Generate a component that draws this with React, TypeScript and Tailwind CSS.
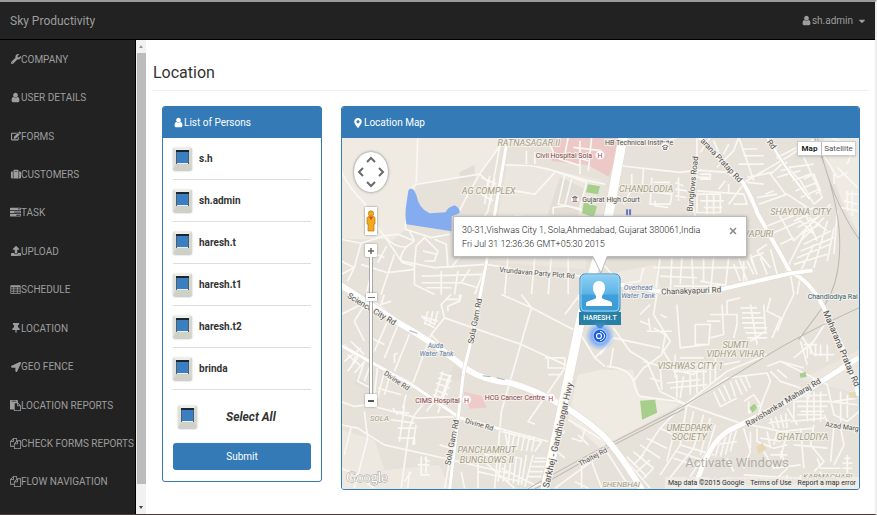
import { useState } from "react";
import type { ReactNode } from "react";
import {
  FaCaretDown,
  FaEdit,
  FaLocationArrow,
  FaMapMarkerAlt,
  FaSuitcase,
  FaThumbtack,
  FaUpload,
  FaWrench,
} from "react-icons/fa";

const ICON_PATHS = {
  user: "M1536 1399q0 109-62.5 187t-150.5 78h-854q-88 0-150.5-78t-62.5-187q0-85 8.5-160.5t31.5-152 58.5-131 94-89 134.5-34.5q131 128 313 128t313-128q76 0 134.5 34.5t94 89 58.5 131 31.5 152 8.5 160.5zm-256-887q0 159-112.5 271.5t-271.5 112.5-271.5-112.5-112.5-271.5 112.5-271.5 271.5-112.5 271.5 112.5 112.5 271.5z",
  tasks:
    "M1024 1408h640v-128h-640v128zm-384-512h1024v-128h-1024v128zm640-512h384v-128h-384v128zm512 832v256q0 26-19 45t-45 19h-1664q-26 0-45-19t-19-45v-256q0-26 19-45t45-19h1664q26 0 45 19t19 45zm0-512v256q0 26-19 45t-45 19h-1664q-26 0-45-19t-19-45v-256q0-26 19-45t45-19h1664q26 0 45 19t19 45zm0-512v256q0 26-19 45t-45 19h-1664q-26 0-45-19t-19-45v-256q0-26 19-45t45-19h1664q26 0 45 19t19 45z",
  table:
    "M160 200h1472q96 0 96 96v1200q0 96-96 96h-1472q-96 0-96-96v-1200q0-96 96-96zm32 312v240h352v-240zm480 0v240h448v-240zm576 0v240h352v-240zm-1056 360v240h352v-240zm480 0v240h448v-240zm576 0v240h352v-240zm-1056 360v230h352v-230zm480 0v230h448v-230zm576 0v230h352v-230z",
  paste:
    "M768 1664h896v-640h-416q-40 0-68-28t-28-68v-416h-384v1152zm256-1440v-64q0-13-9.5-22.5t-22.5-9.5h-704q-13 0-22.5 9.5t-9.5 22.5v64q0 13 9.5 22.5t22.5 9.5h704q13 0 22.5-9.5t9.5-22.5zm256 672h299l-299-299v299zm512 128v672q0 40-28 68t-68 28h-960q-40 0-68-28t-28-68v-160h-544q-40 0-68-28t-28-68v-1344q0-40 28-68t68-28h1088q40 0 68 28t28 68v328q21 13 36 28l408 408q28 28 48 76t20 88z",
  files:
    "M1696 384q40 0 68 28t28 68v1216q0 40-28 68t-68 28h-960q-40 0-68-28t-28-68v-288h-544q-40 0-68-28t-28-68v-672q0-40 20-88t48-76l408-408q28-28 76-48t88-20h416q40 0 68 28t28 68v328q68-40 128-40h416zm-544 213l-299 299h299v-299zm-640-384l-299 299h299v-299zm196 647l316-316v-416h-384v416q0 40-28 68t-68 28h-416v640h512v-256q0-40 20-88t48-76zm956 804v-1152h-384v416q0 40-28 68t-68 28h-416v640h896z",
};

function Glyph({ name, className = "" }: { name: keyof typeof ICON_PATHS; className?: string }) {
  return (
    <svg viewBox="0 0 1792 1792" fill="currentColor" fillRule="evenodd" className={`size-[11px] shrink-0 ${className}`} aria-hidden="true">
      <path d={ICON_PATHS[name]} />
    </svg>
  );
}

const NAV: { label: string; icon: ReactNode }[] = [
  { label: "COMPANY", icon: <FaWrench /> },
  { label: "USER DETAILS", icon: <Glyph name="user" /> },
  { label: "FORMS", icon: <FaEdit /> },
  { label: "CUSTOMERS", icon: <FaSuitcase /> },
  { label: "TASK", icon: <Glyph name="tasks" /> },
  { label: "UPLOAD", icon: <FaUpload /> },
  { label: "SCHEDULE", icon: <Glyph name="table" /> },
  { label: "LOCATION", icon: <FaThumbtack /> },
  { label: "GEO FENCE", icon: <FaLocationArrow /> },
  { label: "LOCATION REPORTS", icon: <Glyph name="paste" /> },
  { label: "CHECK FORMS REPORTS", icon: <Glyph name="files" /> },
  { label: "FLOW NAVIGATION", icon: <Glyph name="files" /> },
];

const PERSONS = ["s.h", "sh.admin", "haresh.t", "haresh.t1", "haresh.t2", "brinda"];

function Tick({ id, checked, onChange }: { id: string; checked: boolean; onChange: () => void }) {
  return (
    <input
      id={id}
      type="checkbox"
      checked={checked}
      onChange={onChange}
      className="h-[23px] w-[19px] shrink-0 appearance-none rounded-[2px] border-x-[3px] border-t-[3px] border-b-[6px] border-t-[#efefea] border-r-[#d6d7ce] border-b-[#cfd1c6] border-l-[#dfe0d8] bg-[#b8c4cc] shadow-[0_1px_2px_#bbb,inset_0_2px_0_#1c2630,inset_1px_0_0_#4c5d6b,inset_-1px_0_0_#4c5d6b,inset_0_-1px_0_#e8eef2] checked:bg-[#3a7fc1]"
    />
  );
}

/* Side streets, one set of paths for each quarter of the map, drawn at three times the map's scale. */
const STREETS = {
  nw: [
    "M250 130L245 265M20 230Q50 290 90 325L130 400L150 425L200 500L300 520L455 510L600 535L740 545",
    "M240 272L435 240L500 150L525 130M435 240L395 310L370 360M435 240L460 262L452 310",
    "M240 272Q215 300 213 405L290 430L345 420M500 212L590 215L640 225L760 260L810 270M575 170V210M600 175V210",
    "M20 435L80 447L150 425L190 420L240 440M80 447L60 520L20 540M150 425Q180 460 215 458L240 440",
    "M157 455L130 505M180 480L140 600M80 510L160 535L240 525M100 470L150 490M60 520L40 560M110 540L95 600",
    "M215 458Q190 490 205 505L240 515L245 455L270 430L310 470L300 500L270 500M300 435L335 450L340 520M265 470L310 480",
    "M240 515V570L300 600M262 545L440 540M262 565H380M275 580H350M320 530V600M370 530L360 600M405 525L380 565L430 580M455 510L420 600M240 440L225 410",
    "M440 250L485 270M445 280L480 290M465 245L450 330M480 255L465 330M440 300L475 320M540 290L600 300L660 235M540 365L620 372",
    "M655 230L755 265L735 340M690 240L670 330L740 345M710 255L690 335M655 360V340L700 335L780 362M520 485L510 600M600 490L590 600M650 480L640 600M700 488V600",
    "M640 130L660 190L735 215M700 130L690 180L760 200M735 140V240M770 130L760 230M715 160L800 170M20 500L60 520",
    "M385 475L350 520M385 475L450 480M500 130L460 350L448 370",
  ],
  ne: [
    "M70 150Q170 160 230 130M60 215L240 235L290 228L290 130M330 130L300 175M290 228L380 235L420 262M340 140L360 190L430 265L560 190L640 135",
    "M415 130L400 170L350 220M385 150L370 180M415 130L460 260M430 185H490M425 165H470M415 210H490M440 250L515 235M440 265L490 270",
    "M95 240V285L70 330M130 225L125 300M155 250L150 330H210L215 300L130 290M160 265H210M165 320V335L205 340M225 265L250 275M225 285L260 290M225 305L258 310M235 250V320M290 235L275 320L285 365M290 290L430 300L440 330H400",
    "M290 300H360V355H290V300M300 320H370M320 300V360M340 300V360M310 340H365M300 240H330V255H300M290 250H325M375 260L355 285M385 270V300M430 270L385 330",
    "M525 150L530 190L600 260L640 330L665 310L610 190M530 190L590 160L640 140M545 210L510 240L555 300M560 240L600 230M575 260L630 240M585 290L650 265M600 310L655 285M565 220L640 210M535 215L560 205M540 230L570 222M530 250L560 240M610 255L640 240L660 290L645 300M495 300L520 290M470 310L530 300M475 330L560 300L620 340",
    "M545 340L530 350L580 440L690 330M500 395L640 340M510 420L600 380M540 450L580 430M610 350L650 440M600 440L670 370M625 370L680 410M580 380L625 360M590 400L650 370M600 420L660 390M610 450L690 410M600 470L700 430M590 490L690 450M580 510L680 480M560 520L620 400M640 450L600 530M680 380L640 520M700 400L680 500M710 350L700 480M590 370L640 420",
    "M500 450L470 470L510 520M490 475L450 490L470 540M510 465L530 540M450 480L465 530M440 500L460 540M540 480L560 530M480 490L500 540",
    "M655 160L710 250L740 235M690 130L760 160L740 210M710 220L770 280M735 140L750 180M735 300H770M730 320L770 330M740 290V350M755 290V365M700 240V270M720 340L770 350",
    "M0 500L90 600M180 490L165 600M215 490L210 600M245 490L240 570M275 490L280 600M310 490V560M340 490L330 600M385 490L375 580M415 490L440 560M160 520H440M180 545L290 550M220 575H360M130 520L120 560L60 570M430 500V570M400 510L420 560M300 560L390 575M570 540L580 600M600 540L590 600",
  ],
  sw: [
    "M20 60L110 15L195 80M110 0L60 80L90 140M195 80L150 190M160 80L120 170M110 130L150 150M150 0L140 30L170 20",
    "M20 155L110 205L215 255L375 365L490 400L640 440M225 120L180 230M355 190L290 120L230 280M180 205V180L190 175M30 150L70 190L40 230M50 140L90 180M30 200L80 160M40 180L80 215M60 235L100 190M90 200L70 260L110 280M110 205L90 260M130 215L120 300M150 230L130 310M70 170L50 220M170 230L150 300",
    "M290 120L330 70L320 30L350 0M330 70L560 150L690 210M335 15H375V0M380 0L375 20L340 35V50M265 70L300 90L310 50M270 85L300 100M280 50L270 90M295 50L285 95M260 65L310 80",
    "M500 0L590 40L735 115L780 190M590 40L500 350L480 580M560 0L590 40M690 60L735 0M730 0L740 60M780 190L810 160M780 190L810 215M630 190H690V220H640V190M690 220L580 380L600 388M640 240H680",
    "M315 235L350 245M310 250L350 260M305 265L345 280M300 285L340 300M295 300L335 315M325 230L300 310M345 240L315 325M350 240L310 355M275 350L300 320L320 340",
    "M20 320L60 335L100 330L250 370L375 365M20 390L70 400L150 450L330 490L520 535M30 480L50 400M20 520L60 535L120 580M60 580L100 430L90 350M200 580L225 400L240 360L265 330M180 350L225 355M170 375L240 385M190 400H240M190 430H240V450M210 330L195 440M245 390L235 450M175 340L190 360M215 300L205 340M130 280L200 300",
    "M260 485V540H285M270 490L285 500M250 510H285M275 485V535M225 530L220 580M230 530L210 560M370 365L330 580M430 500V580M380 530L390 580M315 450L350 460",
    "M510 405L520 460M525 410L520 465M540 412L530 465M555 415L545 465M570 418L560 468M585 422L575 468M600 425L590 470M500 410L620 440L600 470M450 480L560 490M500 480L490 560M515 480L505 560M530 485L520 565M545 485L535 565M560 490L550 570M575 480L560 570M600 490H640M595 500H635M590 515H630M585 530H625M580 545H620M595 480L570 575M450 500L540 580M500 520L600 570M430 530L560 560M660 430L690 410M655 460L690 490M710 430L740 440L750 400M730 420L760 450M680 380L640 560L580 580",
    "M700 375L810 440M660 580L810 470M740 510V580M770 500L800 580M720 560L760 580",
  ],
  se: [
    "M40 100L90 170L140 200L180 290L260 330M40 160L30 220M0 180L40 130L180 160M150 30L120 60M145 70L150 110M120 80L145 90M140 110H215M200 70L180 60M160 100L195 120L185 180L130 220L100 260M170 0L160 60L210 140L190 170L220 220M230 30L240 160L320 150M285 90H330L325 150H285V90M365 30L370 120L330 130M320 80H360M330 60H410V90M380 60V20L420 10M410 90L400 130M420 40H470M425 55H480M425 70H490M425 85H490M430 100H500M435 115H500M440 130H500M450 30L470 150M490 30L495 110L450 140M510 10L500 50L540 70L515 130M580 0L550 60L530 110",
    "M130 200L180 215L280 240L310 205M180 215L185 285M200 265L300 255M210 280L320 270M230 240V310M250 245L240 310M270 240V300M290 230V295M310 205V280M330 200V270M345 190V255M220 230H320M240 190H310M230 210H350M225 180V250M150 250L180 260M370 210L420 200M500 180L380 230L240 340",
    "M20 215Q90 220 100 260T120 305L230 320L420 385L500 400L540 410L640 400M260 330L380 250L500 235L510 260L490 310L470 370M340 290L360 335L410 310M355 280L375 320M370 270L390 315M390 260L405 305M405 255L425 300M420 250L440 290M435 245L450 280M430 320L460 300L480 330L445 355V320M510 230L540 260L600 280M530 225L560 250M540 200L610 220M500 215L540 200L620 240L680 270M600 140L620 210M600 120L640 180H700M610 150H650M620 160V190M630 150V180M645 150V185M660 150V185M680 150V200M690 60L640 140L580 190",
    "M600 305L680 300M580 320H680L770 330M590 335H680M600 350H670M590 360H665M570 380L670 370M620 290V380M640 290V380M660 290V380M580 320V370M560 340L590 390M510 370L520 400M525 365L535 400M540 360L550 400M555 355L560 400M505 385L570 375M680 270L700 360L740 380L775 350M700 320L770 310M720 290V380M740 300V370M640 250L620 320",
    "M240 340L180 400L120 490M180 400L220 420L200 500M260 330L240 450L180 540M280 350L260 440M310 360L280 460L200 560M330 370L300 480M345 390L320 470L260 560M140 430L200 460M120 450L180 490M100 470L160 520M80 485L140 545M100 510L130 480M110 530L150 495M130 550L160 520M240 450L340 480M230 470L320 500M220 490L310 520M350 430L330 480M365 420L345 485M380 410L360 485M395 405L375 480M410 400L390 470M340 450L410 440",
    "M430 400L450 470L430 520M450 410V460M470 400V440L520 460L560 450M500 410L510 460M530 410L520 450M480 430L540 440M560 410L540 490M600 400L610 520M490 470L520 520L600 510M510 480H560M540 470L560 520L520 560M640 390L630 450L670 500L640 530M700 390L690 500M720 400L730 450L700 510M740 480V540M730 490H750M725 505H755M725 520H755M650 490L660 520H720M430 540L600 550M380 490L400 530M580 450L680 460M670 360L690 400",
    "M600 540V580M660 530V580M560 540V580M30 440L150 580M20 470L90 580",
  ],
};

function Streets({ paths, x, y }: { paths: string[]; x: number; y: number }) {
  return (
    <g transform={`translate(${x} ${y}) scale(.3333)`} stroke="#faf8f4" strokeWidth="5" fill="none" strokeLinejoin="round">
      {paths.map((d) => (
        <path key={d} d={d} />
      ))}
    </g>
  );
}

const ROADS = [
  { d: "M342 286L397 322Q435 343 468 370Q485 381 510 383Q560 398 600 433Q615 446 642 490", w: 6 },
  { d: "M623 138L607 225L584 305L566 390L545 490", w: 9 },
  { d: "M699 138L743 184Q752 200 757 214L790 273Q808 280 822 306L843 350L858 396", w: 4 },
  { d: "M620 285L665 293L720 290L790 274L812 271", w: 4 },
  { d: "M694 490Q708 442 728 431L800 395L858 358", w: 5 },
  { d: "M342 346L414 386L460 418L500 429", w: 3 },
  { d: "M508 138L487 262L474 330L464 372L450 490", w: 3 },
  { d: "M766 138L790 175L809 200", w: 2 },
];

const LABELS: { t: string; x: number; y: number; s?: number; r?: number; c?: "area" | "red" | "blue" | "teal" }[] = [
  { t: "RATNASAGAR II", x: 529, y: 147, c: "area" },
  { t: "AG COMPLEX", x: 489, y: 195, c: "area" },
  { t: "CHANDLODIA", x: 646, y: 193, c: "area" },
  { t: "SHAYONA CITY", x: 800, y: 216, c: "area" },
  { t: "VAPURI", x: 758, y: 238, c: "area" },
  { t: "SUMTI", x: 735, y: 348, c: "area" },
  { t: "VIDHYA VIHAR", x: 735, y: 357, c: "area" },
  { t: "VISHWAS CITY 1", x: 690, y: 369, c: "area" },
  { t: "UMEDPARK", x: 689, y: 431, c: "area" },
  { t: "SOCIETY", x: 689, y: 440, c: "area" },
  { t: "GHATLODIYA", x: 802, y: 440, c: "area" },
  { t: "KARMACHARI", x: 827, y: 479, s: 8, c: "area" },
  { t: "PANCHAMRUT", x: 487, y: 453, c: "area" },
  { t: "BUNGLOWS II", x: 487, y: 463, c: "area" },
  { t: "SHENBHAI", x: 621, y: 487, s: 8, c: "area" },
  { t: "SOLA", x: 380, y: 421, s: 8, c: "area" },
  { t: "Civil Hospital Sola", x: 564, y: 159, s: 7, c: "red" },
  { t: "CIMS Hospital", x: 438, y: 403, s: 7, c: "red" },
  { t: "HCG Cancer Centre", x: 515, y: 400, s: 7, c: "red" },
  { t: "Auda", x: 436, y: 348, s: 7, c: "blue" },
  { t: "Water Tank", x: 437, y: 356, s: 7, c: "blue" },
  { t: "Overhead", x: 638, y: 291, s: 7, c: "blue" },
  { t: "Water Tank", x: 638, y: 299, s: 7, c: "blue" },
  { t: "Chandlodiya Rai", x: 832, y: 300, s: 7, c: "teal" },
  { t: "Gujarat High Court", x: 611, y: 203, s: 7 },
  { t: "HB Technical Institute", x: 639, y: 146, s: 7 },
  { t: "Vrundavan Party Plot Rd", x: 537, y: 276, s: 7, r: 5 },
  { t: "Science City Rd", x: 371, y: 312, r: 31 },
  { t: "Sola Gam Rd", x: 478, y: 322, r: -79 },
  { t: "Sola Gam Rd", x: 455, y: 443, r: -79 },
  { t: "Divine Rd", x: 396, y: 383, s: 7, r: 34 },
  { t: "Divine Rd", x: 479, y: 427, s: 7, r: 16 },
  { t: "Sarkhej - Gandhinagar Hwy", x: 561, y: 436, r: -77, s: 9 },
  { t: "Thaltej Rd", x: 594, y: 459, s: 7, r: -28 },
  { t: "Chanakyapuri Rd", x: 691, y: 294, r: -2 },
  { t: "Bunglows Road", x: 695, y: 185, r: -84 },
  { t: "arana Pratap Rd", x: 719, y: 163, r: 47 },
  { t: "Rd", x: 769, y: 147, r: 52 },
  { t: "Maharana Pratap Rd", x: 838, y: 350, r: 67, s: 9 },
  { t: "Ravishankar Maharaj Rd", x: 784, y: 405, r: -31 },
  { t: "Azad Marg", x: 841, y: 429, s: 7, r: 8 },
];

const LABEL_COLORS = { area: "#a39c84", red: "#84404a", blue: "#5c7bab", teal: "#33606b" };

function MapDrawing() {
  return (
    <svg viewBox="342 139 517 350" preserveAspectRatio="xMidYMid slice" className="block size-full" role="img" aria-label="Street map of Sola, Ahmedabad">
      <rect x="342" y="139" width="517" height="350" fill="#e7e2d9" />
      <g fill="#efebe2">
        <path d="M342 139H505L480 175L417 185L406 230L395 240L342 240Z" />
        <path d="M508 165L545 170L600 180L585 270L490 262Z" opacity=".6" />
        <path d="M601 370L633 370L639 395L680 405L600 448L568 420L578 375Z" />
        <path d="M823 139H859V235Q835 200 823 139Z" />
        <path d="M606 275L655 265L660 290L612 290Z" opacity=".7" />
        <path d="M342 430L375 440L385 470L440 465L450 489H342Z" opacity=".7" />
        <path d="M800 380L859 350V395L825 385Z" opacity=".6" />
      </g>
      <g fill="#e2ddd5">
        <path d="M460 173L475 166V180L460 184ZM560 178L586 190L575 226L548 215Z" />
        <path d="M455 365L465 372L458 382L448 378ZM358 377L372 386L367 392L355 384Z" />
      </g>
      <path d="M551 139H622L609 178L588 166L552 162Z" fill="#ecc9c6" />
      <path d="M464 392L482 396L487 408L470 409Z" fill="#eecbc9" />
      <Streets paths={STREETS.nw} x={335} y={95} />
      <Streets paths={STREETS.ne} x={600} y={95} />
      <Streets paths={STREETS.sw} x={335} y={295} />
      <Streets paths={STREETS.se} x={600} y={295} />
      <path d="M640 401L655 400L657 413L642 420ZM749 408L754 404L757 408L752 413ZM799 374L805 372L806 377L800 378ZM588 185L600 187L598 195L586 193ZM584 203L597 207L594 218L582 214Z" fill="#a5cf8b" />
      <path d="M756 447L762 443L766 449L758 454ZM848 393L857 392L856 399L849 397Z" fill="#e8d7b3" />
      <path d="M407 204Q405 216 407 225L452 232V217L460 214Q461 209 455 206Q448 208 446 213L430 214Q419 209 417 196Q413 186 409 191Z" fill="#86acf0" />
      <g fill="none" stroke="#bcb8b2" strokeWidth="1">
        <path d="M528 489Q560 470 600 449L682 407L760 360Q800 335 859 308M535 489L602 451L684 409" />
        <path d="M814 139Q838 200 839 240Q840 280 825 304L798 340M817 139Q830 200 859 241" />
      </g>
      {ROADS.map((r) => (
        <g key={r.d} fill="none" strokeLinejoin="round">
          <path d={r.d} stroke="#e0dbd0" strokeWidth={r.w + 1} />
          <path d={r.d} stroke="#fff" strokeWidth={r.w} />
        </g>
      ))}
      <g stroke="#a9b4c4" strokeWidth="1">
        <path d="M410 331l8 3M483 376l8 1M497 378l8 2" />
      </g>
      <g fontFamily="Roboto, 'Open Sans', sans-serif" textAnchor="middle" stroke="#f4f1ea" strokeWidth="2" strokeLinejoin="round" paintOrder="stroke">
        {LABELS.map((l) => (
          <text
            key={`${l.t}${l.x}`}
            x={l.x}
            y={l.y}
            fontSize={l.s ?? (l.c === "area" ? 9 : 8)}
            fontStyle={l.c === "area" || l.c === "blue" ? "italic" : "normal"}
            fill={l.c ? LABEL_COLORS[l.c] : "#505050"}
            transform={l.r ? `rotate(${l.r} ${l.x} ${l.y})` : undefined}
          >
            {l.t}
          </text>
        ))}
      </g>
      <g fontFamily="Roboto, sans-serif" fontSize="7" textAnchor="middle" fill="#a14450">
        {[[600, 156], [467, 400], [551, 398]].map(([x, y]) => (
          <g key={x}>
            <circle cx={x} cy={y} r="4.5" fill="#fff" stroke="#e5d0d0" strokeWidth=".5" />
            <text x={x} y={y + 3}>H</text>
          </g>
        ))}
      </g>
      <g fill="none" stroke="#6d4a4a">
        <circle cx="575" cy="200" r="4.5" fill="#fff" stroke="#ddd" />
        <path d="M572.500 198.500l2.500-1.500 2.500 1.500zM572.500 202.500h5M574 199v3M576 199v3" strokeWidth=".8" />
        <circle cx="665" cy="148" r="4.500" fill="#fff" stroke="#ddd" />
        <path d="M662 147.500l3-1.500 3 1.500-3 1.500zM663.500 149v1.500h3v-1.500" strokeWidth=".8" />
      </g>
      <path d="M626 210h2v6h-2zM629 210h2v6h-2z" fill="#6476c8" />
      <g fontFamily="Roboto, 'Open Sans', sans-serif">
        <text x="347" y="482" fontFamily="'Liberation Serif', serif" fontSize="14" fill="#fff" stroke="#a5a29c" strokeWidth="1" paintOrder="stroke">Google</text>
        <text x="685" y="467" fontSize="13" fill="#a5a39f" fillOpacity=".85">Activate Windows</text>
        <text x="685" y="484" fontSize="9" fill="#a5a39f" fillOpacity=".7">Go to PC settings to activate Windows.</text>
      </g>
    </svg>
  );
}

function Marker() {
  return (
    <div className="absolute top-[135px] left-[237px] flex w-[42px] flex-col items-center">
      <svg viewBox="0 0 42 41" className="h-[41px] w-[42px]" aria-hidden="true">
        <defs>
          <linearGradient id="pin" x1="0" y1="0" x2="0" y2="1">
            <stop offset="0" stopColor="#8fd0f3" />
            <stop offset=".5" stopColor="#5fb4e6" />
            <stop offset=".55" stopColor="#3f9fdc" />
            <stop offset="1" stopColor="#3c9ad6" />
          </linearGradient>
        </defs>
        <rect x="1" y="1" width="40" height="39" rx="5" fill="url(#pin)" stroke="#3186bd" />
        <rect x="2" y="2" width="38" height="36" rx="4" fill="none" stroke="#9bd6f4" />
        <path d="M20 8c4 0 6 3 6 7s-2 6-3 8v2c2 2 8 2 10 5v3H7v-3c2-3 8-3 10-5v-2c-1-2-3-4-3-8s2-7 6-7z" fill="#fff" />
      </svg>
      <span className="-mt-[2px] h-[13px] w-full bg-[#2880a5] text-center text-[7px] leading-[13px] font-medium text-white">HARESH.T</span>
      <svg viewBox="0 0 30 30" className="-mt-1 size-[30px]" aria-hidden="true">
        <defs>
          <radialGradient id="halo">
            <stop offset=".3" stopColor="#3b82ff" />
            <stop offset="1" stopColor="#6aa6ff" stopOpacity="0" />
          </radialGradient>
        </defs>
        <path d="M11 4h8l-4 6z" fill="#2880a5" />
        <circle cx="15" cy="15" r="15" fill="url(#halo)" />
        <circle cx="15" cy="15" r="7" fill="#1c60e0" stroke="#9dc4ff" strokeWidth="1.500" />
        <circle cx="14" cy="15" r="2.500" fill="none" stroke="#fff" strokeWidth="1.200" />
        <path d="M15 10.500a4.500 4.500 0 010 9" fill="none" stroke="#fff" />
      </svg>
    </div>
  );
}

function MapControls() {
  const button = "flex h-[13px] w-[12px] items-center justify-center rounded-[1px] bg-white shadow-[0_0_2px_#777]";
  return (
    <div className="absolute top-[14px] left-[12px] flex w-[34px] flex-col items-center">
      <button type="button" aria-label="Pan" className="h-[40px] w-[34px] rounded-[50%] bg-white shadow-[0_0_3px_#777]">
        <svg viewBox="0 0 34 40" className="size-full" fill="none" stroke="#6a6a6a" strokeWidth="2" aria-hidden="true">
          <path d="M13 10l4-4 4 4M13 30l4 4 4-4M9 16l-4 4 4 4M25 16l4 4-4 4" />
        </svg>
      </button>
      <button type="button" aria-label="Street View" className="mt-[15px] flex h-[28px] w-[12px] items-center justify-center bg-white shadow-[0_0_2px_#777]">
        <svg viewBox="0 0 10 24" className="h-[24px] w-[10px]" aria-hidden="true">
          <path d="M1 9q0-2 4-2t4 2v6H8v7H2v-7H1z" fill="#f4a81d" stroke="#b87a12" strokeWidth=".7" />
          <circle cx="5" cy="4.500" r="2.700" fill="#f4a81d" stroke="#b87a12" strokeWidth=".7" />
          <path d="M3 8l2 3 2-3z" fill="#d34a2a" />
        </svg>
      </button>
      <button type="button" aria-label="Zoom in" className={`mt-[9px] ${button}`}>
        <svg viewBox="0 0 8 8" className="size-[8px]" stroke="#666" strokeWidth="1.500" aria-hidden="true"><path d="M1 4h6M4 1v6" /></svg>
      </button>
      <div className="flex h-[137px] w-[4px] items-start justify-center border-x border-[#aaa] bg-white pt-[36px]">
        <span className="flex h-[8px] w-[11px] shrink-0 items-center justify-center bg-white shadow-[0_0_2px_#777]">
          <span className="h-px w-[7px] bg-[#777]" />
        </span>
      </div>
      <button type="button" aria-label="Zoom out" className={button}>
        <svg viewBox="0 0 8 8" className="size-[8px]" stroke="#555" strokeWidth="2" aria-hidden="true"><path d="M1 4h6" /></svg>
      </button>
    </div>
  );
}

function InfoWindow({ onClose }: { onClose: () => void }) {
  return (
    <div className="absolute top-[78px] left-[111px] flex h-[41px] w-[294px] items-start justify-between border border-[#bbb] bg-white pt-[6px] pr-[9px] pl-[8px] shadow-[0_1px_4px_#999]">
      <p className="font-[Roboto,sans-serif] text-[9px] leading-[14px] font-light whitespace-nowrap text-[#222]">
        30-31,Vishwas City 1, Sola,Ahmedabad, Gujarat 380061,India
        <br />
        Fri Jul 31 12:36:36 GMT+05:30 2015
      </p>
      <button type="button" aria-label="Close" onClick={onClose} className="mt-[4px]">
        <svg viewBox="0 0 8 8" className="size-[8px]" stroke="#888" strokeWidth="1.500" aria-hidden="true"><path d="M1 1l6 6M7 1L1 7" /></svg>
      </button>
      <svg viewBox="0 0 16 19" className="absolute top-[38px] left-[138px] h-[19px] w-[16px]" aria-hidden="true">
        <path d="M1 1L9 18L15 1" fill="#fff" />
        <path d="M1 2L9 18L15 2" fill="none" stroke="#bbb" />
      </svg>
    </div>
  );
}

export default function App() {
  const [picked, setPicked] = useState<string[]>(PERSONS);
  const [infoOpen, setInfoOpen] = useState(true);
  const all = picked.length === PERSONS.length;
  const toggle = (p: string) => setPicked(picked.includes(p) ? picked.filter((q) => q !== p) : [...picked, p]);

  return (
    <div className="flex h-screen min-h-[515px] flex-col border-t-2 border-r-2 border-b border-t-[#989c9a] border-r-[#eee] border-b-[#4a3c3c] bg-white font-[Roboto,'Liberation_Sans',sans-serif] text-[10px] text-[#333]">
      <header className="flex h-[38px] shrink-0 items-center justify-between border-b border-black bg-[#222] pr-[8px] pl-[10px] text-[#9d9d9d]">
        <a href="#home" className="text-[12px]">Sky Productivity</a>
        <button type="button" className="flex items-center">
          <Glyph name="user" />
          sh.admin
          <FaCaretDown className="ml-[4px] size-[10px]" />
        </button>
      </header>

      <div className="flex min-h-0 flex-1">
        <nav className="flex w-[136px] shrink-0 flex-col border-r border-black bg-[#222] pb-[13px] pl-[10px] text-[#9d9d9d]">
          {NAV.map((n) => (
            <a key={n.label} href={`#${n.label.toLowerCase().replaceAll(" ", "-")}`} className="flex flex-1 items-center whitespace-nowrap">
              <span className="flex w-[11px] justify-center">{n.icon}</span>
              {n.label}
            </a>
          ))}
        </nav>
        <div className="flex w-[10px] shrink-0 flex-col items-center bg-[#f1f1f1]" aria-hidden="true">
          <svg viewBox="0 0 10 13" className="h-[13px] w-[10px]"><path d="M3 8h4L5 5z" fill="#999" /></svg>
          <span className="w-[9px] flex-1 bg-[#bcbcbc]" />
          <svg viewBox="0 0 10 30" className="h-[30px] w-[10px]"><path d="M3 22h4L5 25z" fill="#444" /></svg>
        </div>

        <main className="min-w-0 flex-1 overflow-hidden pr-[6px] pl-[7px]">
          <h1 className="border-b border-[#eee] pt-[20px] pb-[4px] text-[16px] leading-[26px]">Location</h1>
          <div className="flex items-start gap-[19px] pt-[15px] pr-[9px] pl-[9px]">
            <section className="w-[160px] shrink-0 rounded-[3px] border border-[#337ab7]">
              <h2 className="flex h-[31px] items-center bg-[#337ab7] pl-[10px] text-white">
                <Glyph name="user" />
                List of Persons
              </h2>
              <form className="px-[10px] pb-[11px]" onSubmit={(e) => e.preventDefault()}>
                <ul>
                  {PERSONS.map((p) => (
                    <li key={p} className="flex h-[42px] items-center gap-[7px] border-b border-[#ddd]">
                      <Tick id={`p-${p}`} checked={picked.includes(p)} onChange={() => toggle(p)} />
                      <label htmlFor={`p-${p}`} className="font-bold">{p}</label>
                    </li>
                  ))}
                </ul>
                <div className="flex h-[53px] items-center pl-[5px]">
                  <Tick id="select-all" checked={all} onChange={() => setPicked(all ? [] : PERSONS)} />
                  <label htmlFor="select-all" className="flex-1 pl-[29px] text-[12px] font-bold italic">Select All</label>
                </div>
                <button type="submit" className="h-[27px] w-full rounded-[3px] bg-[#337ab7] text-white">Submit</button>
              </form>
            </section>

            <section className="min-w-0 flex-1 overflow-hidden rounded-[3px] border border-[#337ab7]">
              <h2 className="flex h-[31px] items-center bg-[#337ab7] pl-[11px] text-white">
                <FaMapMarkerAlt className="mr-px" />
                Location Map
              </h2>
              <div className="relative h-[351px] overflow-hidden">
                <MapDrawing />
                <MapControls />
                <div className="absolute top-[3px] right-[3px] flex h-[15px] border border-[#ccc] bg-white text-[8px] shadow-sm">
                  <button type="button" className="w-[23px] font-bold text-[#222]">Map</button>
                  <button type="button" className="w-[34px] border-l border-[#bbb] text-[#555]">Satellite</button>
                </div>
                <Marker />
                {infoOpen && <InfoWindow onClose={() => setInfoOpen(false)} />}
                <div className="absolute right-0 bottom-0 flex h-[12px] items-center gap-[6px] bg-[#f2efe9]/70 px-[3px] text-[7px] text-[#333]">
                  <span>Map data ©2015 Google</span>
                  <a href="#terms">Terms of Use</a>
                  <a href="#report">Report a map error</a>
                </div>
              </div>
            </section>
          </div>
        </main>
      </div>
    </div>
  );
}
